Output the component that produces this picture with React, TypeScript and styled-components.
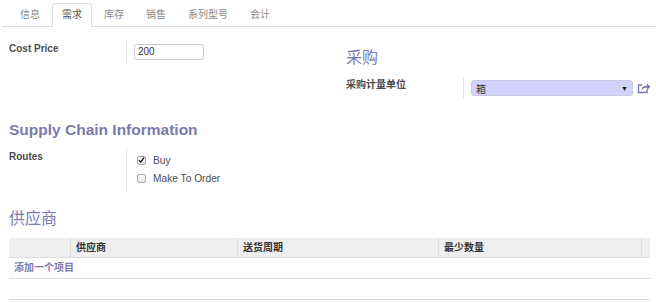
import React from 'react'
import styled, { createGlobalStyle } from 'styled-components'

const GlobalStyle = createGlobalStyle`
    body {
        margin: 0;
        background: #ffffff;
        font-family: "Liberation Sans", Arial, "Noto Sans CJK SC", sans-serif;
        font-size: 10px;
        color: #4c4c4c;
    }
`

const TabBar = styled.div`
    display: flex;
    height: 23px;
    padding: 3px 0 0 8px;
    margin-left: 2px;
    border-bottom: 1px solid #dddddd;
`

const Tab = styled.div<{ $active?: boolean }>`
    height: 24px;
    line-height: 22px;
    padding: 0 9px;
    margin-right: 2px;
    margin-bottom: -1px;
    box-sizing: border-box;
    color: ${p => (p.$active ? '#555555' : '#8a8a8a')};
    background: ${p => (p.$active ? '#ffffff' : 'transparent')};
    border: 1px solid ${p => (p.$active ? '#dddddd' : 'transparent')};
    border-bottom: none;
    border-radius: 3px 3px 0 0;
`

const Sheet = styled.div`
    padding: 0 6px 0 9px;
`

const TopGrid = styled.div`
    display: grid;
    grid-template-columns: 337px 1fr;
`

const Group = styled.div<{ $offset?: number }>`
    padding-top: ${p => p.$offset || 0}px;
`

const Heading = styled.div<{ $cjk?: boolean; $gap?: number }>`
    margin-top: ${p => p.$gap ?? 21}px;
    margin-bottom: 9px;
    height: 20px;
    line-height: 20px;
    font-size: ${p => (p.$cjk ? '16px' : '15.5px')};
    font-weight: ${p => (p.$cjk ? 'normal' : 'bold')};
    color: #7c7bad;
`

const Field = styled.div`
    display: flex;
`

const Label = styled.div`
    width: 117px;
    padding-top: 2px;
    line-height: 12px;
    font-weight: bold;
    color: #4c4c4c;
`

const Value = styled.div<{ $pad?: number }>`
    border-left: 1px solid #e4e4e4;
    padding: ${p => p.$pad ?? 3}px 0 3px 7px;
    display: flex;
    flex-direction: column;
`

const TextInput = styled.div`
    width: 70px;
    height: 16px;
    box-sizing: border-box;
    border: 1px solid #cccccc;
    border-radius: 3px;
    padding: 0 3px;
    line-height: 14px;
    color: #333333;
`

const SelectRow = styled.div`
    display: flex;
    align-items: center;
    gap: 4px;
`

const Select = styled.div`
    width: 162px;
    height: 16px;
    box-sizing: border-box;
    border: 1px solid #c8c8e0;
    border-radius: 3px;
    background: #d2d2fa;
    padding: 0 4px;
    display: flex;
    align-items: center;
    justify-content: space-between;
    color: #333333;
`

const Arrow = styled.span`
    font-size: 7px;
    color: #111111;
`

const CheckRow = styled.label`
    display: flex;
    align-items: center;
    height: 18px;
    gap: 7px;
    padding-left: 3px;
    font-size: 10.2px;
    color: #4c4c4c;
`

const Box = styled.span`
    width: 9px;
    height: 9px;
    box-sizing: border-box;
    border: 1px solid #a8a8a8;
    border-radius: 2px;
    background: linear-gradient(#ffffff, #e6e6e6);
    display: flex;
    align-items: center;
    justify-content: center;
`

const Table = styled.div`
    margin-top: 9px;
    width: 641px;
`

const HeadRow = styled.div`
    display: grid;
    grid-template-columns: 61px 167px 201px 203px 9px;
    height: 19px;
    background: #eeeeee;
    border-bottom: 1px solid #dddddd;
`

const HeadCell = styled.div<{ $first?: boolean }>`
    border-left: ${p => (p.$first ? 'none' : '1px solid #dddddd')};
    padding-left: 5px;
    line-height: 19px;
    font-weight: bold;
    color: #333333;
`

const Row = styled.div`
    height: 20px;
    line-height: 20px;
    border-bottom: 1px solid #dddddd;
    padding-left: 5px;
`

const AddLink = styled.span`
    color: #7c7bad;
    font-weight: bold;
`

const Check = () => (
    <svg width="8" height="8" viewBox="0 0 8 8">
        <path d="M1 4.2 L3.2 6.3 L7 1.2" stroke="#222" strokeWidth="1.6" fill="none" />
    </svg>
)

const ExternalIcon = () => (
    <svg width="14" height="12" viewBox="0 0 14 12">
        <path d="M5 3 H1.5 V10.5 H10 V7.5" stroke="#7c7bad" strokeWidth="1.4" fill="none" />
        <path d="M4.5 8 C5 4.5 7.5 3.8 10 3.8 V1.5 L13.5 4.8 L10 8 V5.8 C7.8 5.8 6 6.3 4.5 8 Z" fill="#7c7bad" />
    </svg>
)

const tabs = ['信息', '需求', '库存', '销售', '系列型号', '会计']

const App: React.FC = () => {
    return (
        <>
            <GlobalStyle />
            <TabBar>
                {tabs.map(t => (
                    <Tab key={t} $active={t === '需求'}>{t}</Tab>
                ))}
            </TabBar>
            <Sheet>
                <TopGrid>
                    <Group $offset={14}>
                        <Field>
                            <Label>Cost Price</Label>
                            <Value>
                                <TextInput>200</TextInput>
                            </Value>
                        </Field>
                    </Group>
                    <Group>
                        <Heading $cjk>采购</Heading>
                        <Field>
                            <Label>采购计量单位</Label>
                            <Value>
                                <SelectRow>
                                    <Select>
                                        <span>箱</span>
                                        <Arrow>▼</Arrow>
                                    </Select>
                                    <ExternalIcon />
                                </SelectRow>
                            </Value>
                        </Field>
                    </Group>
                </TopGrid>

                <Heading>Supply Chain Information</Heading>
                <Field>
                    <Label>Routes</Label>
                    <Value $pad={2}>
                        <CheckRow><Box><Check /></Box>Buy</CheckRow>
                        <CheckRow><Box />Make To Order</CheckRow>
                    </Value>
                </Field>

                <Heading $cjk $gap={19}>供应商</Heading>
                <Table>
                    <HeadRow>
                        <HeadCell $first />
                        <HeadCell>供应商</HeadCell>
                        <HeadCell>送货周期</HeadCell>
                        <HeadCell>最少数量</HeadCell>
                        <HeadCell />
                    </HeadRow>
                    <Row><AddLink>添加一个项目</AddLink></Row>
                    <Row />
                </Table>
            </Sheet>
        </>
    )
}

export default App
